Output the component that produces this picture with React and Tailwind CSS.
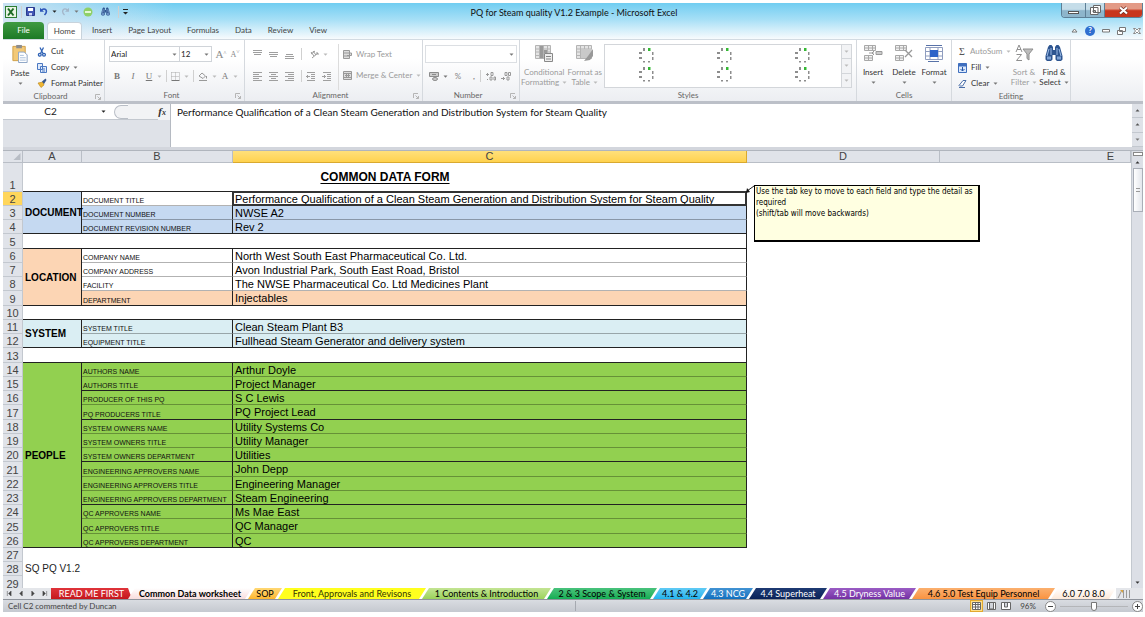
import { useState } from 'react';

// sections of the data form: label column, field column and value column
const SECTIONS = [
  {
    name: 'DOCUMENT', start: 2, color: 'bg-[#c5d9f1]',
    rows: [
      ['DOCUMENT TITLE', 'Performance Qualification of a Clean Steam Generation and Distribution System for Steam Quality', 'white'],
      ['DOCUMENT NUMBER', 'NWSE A2'],
      ['DOCUMENT REVISION NUMBER', 'Rev 2'],
    ],
  },
  {
    name: 'LOCATION', start: 6, color: 'bg-[#fcd5b4]',
    rows: [
      ['COMPANY NAME', 'North West South East Pharmaceutical Co. Ltd.', 'white'],
      ['COMPANY ADDRESS', 'Avon Industrial Park, South East Road, Bristol', 'white'],
      ['FACILITY', 'The NWSE Pharmaceutical Co. Ltd Medicines Plant', 'white'],
      ['DEPARTMENT', 'Injectables'],
    ],
  },
  {
    name: 'SYSTEM', start: 11, color: 'bg-[#daeef3]',
    rows: [
      ['SYSTEM TITLE', 'Clean Steam Plant B3'],
      ['EQUIPMENT TITLE', 'Fullhead Steam Generator and delivery system'],
    ],
  },
  {
    name: 'PEOPLE', start: 14, color: 'bg-[#92d050]',
    rows: [
      ['AUTHORS NAME', 'Arthur Doyle'],
      ['AUTHORS TITLE', 'Project Manager', '', true],
      ['PRODUCER OF THIS PQ', 'S C Lewis'],
      ['PQ PRODUCERS TITLE', 'PQ Project Lead', '', true],
      ['SYSTEM OWNERS NAME', 'Utility Systems Co'],
      ['SYSTEM OWNERS TITLE', 'Utility Manager'],
      ['SYSTEM OWNERS DEPARTMENT', 'Utilities', '', true],
      ['ENGINEERING APPROVERS NAME', 'John Depp'],
      ['ENGINEERING APPROVERS TITLE', 'Engineering Manager'],
      ['ENGINEERING APPROVERS DEPARTMENT', 'Steam Engineering', '', true],
      ['QC APPROVERS NAME', 'Ms Mae East'],
      ['QC APPROVERS TITLE', 'QC Manager'],
      ['QC APPROVERS DEPARTMENT', 'QC'],
    ],
  },
];

const SHEETS = [
  { name: 'READ ME FIRST', cls: 'w-[81px] bg-linear-to-b from-[#e0333a] to-[#c4161c] text-white' },
  { name: 'Common Data worksheet', cls: 'w-[124px] bg-linear-to-b from-white to-[#f8dcdc] font-bold text-black' },
  { name: 'SOP', cls: 'w-[34px] bg-linear-to-b from-[#ffd873] to-[#fdb72c] text-black' },
  { name: 'Front, Approvals and Revisons', cls: 'w-[148px] bg-[#ffff1e] text-[#333300]' },
  { name: '1 Contents & Introduction', cls: 'w-[129px] bg-linear-to-b from-[#c3e493] to-[#9bd35a] text-black' },
  { name: '2 & 3 Scope & System', cls: 'w-[110px] bg-linear-to-b from-[#48c27c] to-[#10ae54] text-black' },
  { name: '4.1 & 4.2', cls: 'w-[54px] bg-linear-to-b from-[#5fcaf5] to-[#1fb4ee] text-black' },
  { name: '4.3 NCG', cls: 'w-[50px] bg-linear-to-b from-[#4193d3] to-[#0f70bf] text-white' },
  { name: '4.4 Superheat', cls: 'w-[78px] bg-linear-to-b from-[#1e3a72] to-[#0a2259] text-white' },
  { name: '4.5 Dryness Value', cls: 'w-[93px] bg-linear-to-b from-[#9a5cc4] to-[#7430a4] text-white' },
  { name: '4.6 5.0 Test Equip Personnel', cls: 'w-[143px] bg-linear-to-b from-[#fbb06e] to-[#fa9340] text-black' },
  { name: '6.0 7.0 8.0', cls: 'w-[65px] bg-linear-to-b from-white to-[#fde9d9] text-black' },
];

const MENU = ['Insert', 'Page Layout', 'Formulas', 'Data', 'Review', 'View'];

// whole-pixel row heights that average out at 14.25px
const rowHeight = (n) => (n === 1 ? 'h-[29px]' : n % 4 === 1 ? 'h-[15px]' : 'h-[14px]');

function Caret({ className = 'text-[#777]' }) {
  return (
    <svg viewBox="0 0 5 3" className={`h-[3px] w-[5px] shrink-0 ${className}`} fill="currentColor">
      <path d="M0.5 0.5h4L2.5 2.8z" />
    </svg>
  );
}

function Launcher() {
  return (
    <svg viewBox="0 0 6 6" className="h-[6px] w-[6px]" fill="none" stroke="#b5b5b5">
      <path d="M0.5 5V0.5H5M2.5 2.5l3 3M5.5 3v2.5H3" />
    </svg>
  );
}

function Group({ label, width, launcher, children }) {
  return (
    <section className={`flex shrink-0 flex-col border-r border-[#d5d9de] ${width}`}>
      <div className="flex h-[51px] pt-1">{children}</div>
      <div className="flex h-[11px] items-center px-[3px] text-[#666]">
        <span className="flex-1 text-center">{label}</span>
        {launcher && <button aria-label={`${label} options`}><Launcher /></button>}
      </div>
    </section>
  );
}

function BigButton({ icon, lines, width, disabled }) {
  return (
    <button className={`flex flex-col items-center whitespace-nowrap ${width} ${disabled ? 'text-[#9b9b9b]' : 'text-[#333]'}`}>
      {icon}
      <span className="mt-[5px] leading-[10px]">{lines[0]}</span>
      <span className="flex h-[10px] items-center gap-[3px] leading-[10px]">
        {lines[1]}
        <Caret className={disabled ? 'text-[#bbb]' : 'text-[#777]'} />
      </span>
    </button>
  );
}

function SmallButton({ icon, label, caret, disabled }) {
  return (
    <button className={`flex h-4 items-center gap-1 whitespace-nowrap ${disabled ? 'text-[#9b9b9b]' : 'text-[#333]'}`}>
      {icon}
      <span>{label}</span>
      {caret && <Caret className={disabled ? 'text-[#bbb]' : 'text-[#777]'} />}
    </button>
  );
}

// three-line alignment glyphs, drawn on a 9x8 grid
function Lines({ d, label }) {
  return (
    <button aria-label={label} className="w-4">
      <svg viewBox="0 0 9 9" className="h-[9px] w-[9px]" fill="none" stroke="#9f9f9f"><path d={d} /></svg>
    </button>
  );
}

const Divider = () => <span className="h-3 w-px shrink-0 bg-[#d0d0d0]" />;

function Binoculars({ className }) {
  return (
    <svg viewBox="0 0 18 18" className={className}>
      <path d="M3 3l1.500-2h2L8 3v3h2V3l1.500-2h2L15 3l2.500 9v3.500L16 17h-4l-1.500-1.500V11h-3v4.500L6 17H2L.5 15.500V12z" fill="#2e5590" />
      <path d="M4 5l-2 7M14 5l2 7M6 4v7M12 4v7" stroke="#9dbce6" />
      <path d="M2 12.500h4v3H2zM12 12.500h4v3h-4z" fill="#7ea2d4" />
    </svg>
  );
}

function CellsIcon({ children }) {
  return (
    <svg viewBox="0 0 20 18" className="h-[18px] w-[20px]" fill="#f1f1f1" stroke="#a8a8a8">
      <path d="M1.500 1.500h11v5h-11zM5.500 1.500v5M9.500 1.500v5M1.500 4h11M1.500 11.500h8v5h-8zM5.500 11.500v5M1.500 14h8" />
      {children}
    </svg>
  );
}

function GridIcon({ children }) {
  return (
    <svg viewBox="0 0 18 18" className="h-[18px] w-[18px] shrink-0" fill="#e4e4e4" stroke="#b4b4b4">
      <path d="M.5 1.500h15v13H.5zM4.500 1.500v13M8.500 1.500v13M12.500 1.500v13M.5 5h15M.5 8h15M.5 11.500h15" />
      {children}
    </svg>
  );
}

// one preview cell of the style gallery: two rings of dashes
function StyleSample() {
  const ring = (y) => (
    <g key={y}>
      <path d={`M5 ${y}h2v3h-2zM1 ${y + 4}h3v2h-3zM1 ${y + 9}h3v2h-3zM5 ${y + 13}h2v1.500h-2zM10 ${y + 13}h2v1.500h-2zM14 ${y + 4}h1.500v3h-1.500zM14 ${y + 9}h1.500v3h-1.500z`} fill="#8d8d8d" />
      <path d={`M10 ${y}h2.500v3h-2.500z`} fill="#35b835" />
    </g>
  );
  return <svg viewBox="0 0 17 36" className="h-[36px] w-[17px]">{[0, 19].map(ring)}</svg>;
}

function TitleBar() {
  return (
    <header className="flex h-[19px] items-start">
      <div className="flex h-[17px] flex-1 items-center gap-1 pl-[2px]">
        <svg viewBox="0 0 12 12" className="h-3 w-3">
          <rect x=".5" y=".5" width="11" height="11" fill="#e9f5e4" stroke="#2d7d32" />
          <path d="M3 2.500l5.500 7M8.500 2.500L3 9.500" stroke="#1d6b25" strokeWidth="2" />
        </svg>
        <Divider />
        <button aria-label="Save">
          <svg viewBox="0 0 9 9" className="h-[9px] w-[9px]">
            <path d="M.5.5h8v8h-8z" fill="#4357b5" stroke="#2b3b8f" />
            <path d="M2 1h5v3H2z" fill="#fff" /><path d="M3 6h3v2.500H3z" fill="#cfd6f5" />
          </svg>
        </button>
        <button aria-label="Undo" className="flex items-center gap-1">
          <svg viewBox="0 0 9 9" className="h-[9px] w-[9px]" fill="none" stroke="#2d54b8" strokeWidth="1.600">
            <path d="M2 3.500C6-.5 9.500 4 5.500 8" /><path d="M1 .8v4h4z" fill="#2d54b8" stroke="none" />
          </svg>
          <Caret className="text-[#222]" />
        </button>
        <button aria-label="Redo" className="flex items-center gap-1">
          <svg viewBox="0 0 9 9" className="h-[9px] w-[9px]" fill="none" stroke="#a3b5c8" strokeWidth="1.300">
            <path d="M7 3.500C3-.5-.5 4 3.500 8" /><path d="M8 .8v4H4z" fill="#a3b5c8" stroke="none" />
          </svg>
          <Caret className="text-[#777]" />
        </button>
        <button aria-label="Check">
          <svg viewBox="0 0 10 10" className="h-[10px] w-[10px]">
            <circle cx="5" cy="5" r="4.500" fill="#8fd067" /><path d="M2 5h6" stroke="#e3f7d5" strokeWidth="2" />
          </svg>
        </button>
        <button aria-label="Find" className="px-1"><Binoculars className="h-[9px] w-[9px]" /></button>
        <Divider />
        <button aria-label="Customize toolbar">
          <svg viewBox="0 0 5 6" className="h-[6px] w-[5px]" fill="#222"><path d="M0 0h5v1H0zM0 3h5L2.500 5.500z" /></svg>
        </button>
      </div>
      <h1 className="flex h-[19px] items-center text-[9px] whitespace-nowrap text-[#111]">PQ for Steam quality V1.2 Example - Microsoft Excel</h1>
      <div className="flex flex-1 justify-end">
        <div className="flex h-[15px] overflow-hidden rounded-b-sm border border-t-0 border-[#5d7f96]">
          <button aria-label="Minimize" className="flex w-6 items-end justify-center border-r border-[#5d7f96] bg-linear-to-b from-[#c5dde9] from-45% to-[#8db5cb] to-55% pb-[3px]">
            <span className="h-[3px] w-[11px] border border-[#555] bg-white" />
          </button>
          <button aria-label="Restore" className="flex w-[19px] items-center justify-center border-r border-[#5d7f96] bg-linear-to-b from-[#c5dde9] from-45% to-[#8db5cb] to-55%">
            <svg viewBox="0 0 11 10" className="h-[10px] w-[11px]" fill="#fff" stroke="#666"><path d="M3.500.5h7v7h-7zM.5 2.500h7.500v7H.5zM3 5.500h2.500v1.500H3z" /></svg>
          </button>
          <button aria-label="Close" className="flex w-[37px] items-center justify-center bg-linear-to-b from-[#e39a86] from-40% to-[#c8361d] to-55%">
            <svg viewBox="0 0 11 9" className="h-[9px] w-[11px]">
              <path d="M2 1.500l7 6M9 1.500l-7 6" stroke="#6b2a20" strokeWidth="3.600" /><path d="M2 1.500l7 6M9 1.500l-7 6" stroke="#fff" strokeWidth="2.200" />
            </svg>
          </button>
        </div>
      </div>
    </header>
  );
}

function RibbonTabs() {
  return (
    <nav className="flex h-[17px] items-stretch text-[#444]">
      <button className="w-[41px] rounded-t-sm bg-linear-to-b from-[#3f9a42] to-[#1c7a26] text-white">File</button>
      <button className="ml-[3px] w-[35px] rounded-t-sm border border-b-0 border-[#c8d3dc] bg-white">Home</button>
      <div className="ml-[2px] flex">
        {MENU.map((m) => <button key={m} className="px-2">{m}</button>)}
      </div>
      <div className="ml-auto flex items-center gap-[7px] pr-[2px]">
        <button aria-label="Collapse ribbon"><svg viewBox="0 0 7 5" className="h-[5px] w-[7px]" fill="#fff" stroke="#777"><path d="M1 4l2.500-3L6 4z" /></svg></button>
        <button aria-label="Help" className="flex h-[10px] w-[10px] items-center justify-center rounded-full bg-[#2f6fd0] text-[8px] font-bold text-white">?</button>
        <button aria-label="Minimize workbook"><svg viewBox="0 0 8 4" className="h-1 w-2" fill="#fff" stroke="#777"><path d="M.5.5h7v2.500h-7z" /></svg></button>
        <button aria-label="Restore workbook"><svg viewBox="0 0 9 8" className="h-2 w-[9px]" fill="#fff" stroke="#777"><path d="M2.500.5h6v4h-6zM.5 3.500h5v4h-5z" /></svg></button>
        <button aria-label="Close workbook"><svg viewBox="0 0 8 8" className="h-2 w-2" stroke="#888"><path d="M.5 1.500h2L4 3l1.500-1.500h2L5.500 4l2 2.500h-2L4 5 2.500 6.500h-2L2.500 4z" fill="#fff" /></svg></button>
      </div>
    </nav>
  );
}

function Ribbon() {
  const toolRow = 'flex h-[18px] items-center';
  return (
    <div className="flex h-[62px] border-t border-[#d3dbe2] bg-linear-to-b from-white from-30% to-[#eceef2]">
      <Group label="Clipboard" width="w-[102px]" launcher>
        <BigButton
          width="w-[34px]" lines={['Paste', '']}
          icon={(
            <svg viewBox="0 0 18 20" className="h-[19px] w-[18px] shrink-0">
              <path d="M1.500 2.500h13v15h-13z" fill="#f3c977" stroke="#cf9f48" /><path d="M5 1h6v3.500H5z" fill="#8d8d8d" />
              <path d="M7.500 8.500h6l3 3v8h-9z" fill="#fff" stroke="#8aa2c4" /><path d="M9 12h4M9 14.500h6M9 17h6" stroke="#a8bedb" />
            </svg>
          )}
        />
        <div className="flex flex-col items-start">
          <SmallButton
            label="Cut"
            icon={<svg viewBox="0 0 10 10" className="h-[10px] w-[10px]" fill="none" stroke="#2f62b5" strokeWidth="1.300"><path d="M3 .5l3 6M6.500.5l-3 6" /><circle cx="2.800" cy="7.800" r="1.400" /><circle cx="7" cy="7.800" r="1.400" /></svg>}
          />
          <SmallButton
            label="Copy" caret
            icon={<svg viewBox="0 0 10 10" className="h-[10px] w-[10px]" fill="#dfeafb" stroke="#4a78c2"><path d="M.5.5h5v6h-5zM3.500 3.500h6v6h-6zM5 6h3M5 8h3" /></svg>}
          />
          <SmallButton
            label="Format Painter"
            icon={<svg viewBox="0 0 10 10" className="h-[10px] w-[10px]"><path d="M1 5l5-1 1 3-3 2.500z" fill="#f0b732" stroke="#b78318" strokeWidth=".6" /><path d="M5 3.500L8.500.5l1 1.500L7 6z" fill="#39588d" /></svg>}
          />
        </div>
      </Group>

      <Group label="Font" width="w-[140px]" launcher>
        <div className="flex flex-1 flex-col gap-[7px] px-1 pt-px">
          <div className={toolRow}>
            <label className="relative flex h-4 w-[71px] items-center border border-[#d0d4d9] bg-white">
              <select aria-label="Font name" className="w-full appearance-none px-px text-[#222] outline-none"><option>Arial</option></select>
              <span className="pointer-events-none absolute right-[2px]"><Caret /></span>
            </label>
            <label className="relative flex h-4 w-8 items-center border border-l-0 border-[#d0d4d9] bg-white">
              <select aria-label="Font size" className="w-full appearance-none px-px text-[#222] outline-none"><option>12</option></select>
              <span className="pointer-events-none absolute right-[2px]"><Caret /></span>
            </label>
            <button className="ml-px w-4 font-['Liberation_Serif'] text-[11px] text-[#888]">A<sup className="text-[6px]">^</sup></button>
            <button className="w-3 font-['Liberation_Serif'] text-[8px] text-[#888]">A<sup className="text-[6px]">˅</sup></button>
          </div>
          <div className="flex h-3 items-center font-['Liberation_Serif'] text-[9px] text-[#777]">
            <button className="w-4 font-bold">B</button>
            <button className="w-4 italic">I</button>
            <button className="w-4 underline">U</button>
            <Caret className="mr-1 text-[#bbb]" />
            <Divider />
            <button aria-label="Borders" className="mx-1"><svg viewBox="0 0 9 9" className="h-[9px] w-[9px]" fill="none" stroke="#aaa"><path d="M.5 8.500h8" stroke="#777" /><path d="M.5.5h8v8M.5.5v8M4.500.5v8M.5 4.500h8" strokeDasharray="1 1" /></svg></button>
            <Caret className="mr-1 text-[#bbb]" />
            <Divider />
            <button aria-label="Fill color" className="mx-1"><svg viewBox="0 0 10 9" className="h-[9px] w-[10px]" fill="none" stroke="#999"><path d="M1 4l3-3 3.500 3L5 6.500zM8.500 4v2.500M1 8.500h8" /></svg></button>
            <Caret className="text-[#bbb]" />
            <button className="w-4">A</button>
            <Caret className="text-[#bbb]" />
          </div>
        </div>
      </Group>

      <Group label="Alignment" width="w-[178px]" launcher>
        <div className="flex flex-col gap-[7px] pt-px pl-2">
          <div className={toolRow}>
            <Lines label="Top align" d="M0 .5h9M0 2.500h9M1 4.500h7" />
            <Lines label="Middle align" d="M0 2.500h9M0 4.500h9M1 6.500h7" />
            <Lines label="Bottom align" d="M1 4.500h7M0 6.500h9M0 8.500h9" />
            <Divider />
            <button aria-label="Orientation" className="ml-2 flex items-center gap-1">
              <svg viewBox="0 0 9 9" className="h-[9px] w-[9px]" fill="none" stroke="#999"><path d="M1 2l3 4M3 1l3 4M1 4l4-3M2 8l6-5M6 3h2v2" /></svg>
              <Caret className="text-[#bbb]" />
            </button>
          </div>
          <div className="flex h-3 items-center">
            <Lines label="Align left" d="M0 .5h9M0 2.500h6M0 4.500h9M0 6.500h6M0 8.500h9" />
            <Lines label="Center" d="M0 .5h9M2 2.500h5M0 4.500h9M2 6.500h5M0 8.500h9" />
            <Lines label="Align right" d="M0 .5h9M3 2.500h6M0 4.500h9M3 6.500h6M0 8.500h9" />
            <Divider />
            <span className="ml-1 flex">
              <Lines label="Decrease indent" d="M1 .5h8M5 2.500h4M5 4.500h4M5 6.500h4M1 8.500h8M0 4.500h4M1.500 3v3" />
              <Lines label="Increase indent" d="M1 .5h8M5 2.500h4M5 4.500h4M5 6.500h4M1 8.500h8M0 4.500h4M2.500 3v3" />
            </span>
          </div>
        </div>
        <div className="flex flex-col gap-[5px] border-l border-[#dcdcdc] pt-[2px] pl-1">
          <SmallButton
            disabled label="Wrap Text"
            icon={<svg viewBox="0 0 9 9" className="h-[9px] w-[9px]" fill="#ddd" stroke="#999"><path d="M.5.5h6v8h-6zM.5 3h8v2.500H4M.5 6h6" /></svg>}
          />
          <SmallButton
            disabled caret label="Merge & Center"
            icon={<svg viewBox="0 0 9 9" className="h-[9px] w-[9px]" fill="#ddd" stroke="#999"><path d="M.5.5h8v8h-8zM.5 2.500h8M.5 6.500h8M2 4.500h5M3.500 3v3M5.500 3v3" /></svg>}
          />
        </div>
      </Group>

      <Group label="Number" width="w-[97px]" launcher>
        <div className="flex flex-1 flex-col gap-[7px] px-[2px] pt-px">
          <label className="relative flex h-[18px] items-center border border-[#dcdfe3] bg-white">
            <select aria-label="Number format" className="w-full appearance-none outline-none"><option> </option></select>
            <span className="pointer-events-none absolute right-[2px]"><Caret /></span>
          </label>
          <div className="flex h-3 items-center pl-1 text-[#888]">
            <button aria-label="Accounting format" className="mr-1"><svg viewBox="0 0 10 9" className="h-[9px] w-[10px]" fill="#ccc" stroke="#8b8b8b"><path d="M.5.5h9v4h-9zM3 2.500h4" /><ellipse cx="6" cy="7" rx="2.500" ry="1.500" /></svg></button>
            <Caret />
            <button className="w-5">%</button>
            <button className="w-3 font-bold">,</button>
            <Divider />
            <button aria-label="Increase decimal" className="mx-[5px]"><svg viewBox="0 0 10 9" className="h-[9px] w-[10px]" fill="none" stroke="#999"><path d="M0 2.500h3M1.500 1v3M5 .5h2v3H5zM8 5h1.500v3H8zM4 5h2v3H4zM1 7.500h1" /></svg></button>
            <button aria-label="Decrease decimal"><svg viewBox="0 0 10 9" className="h-[9px] w-[10px]" fill="none" stroke="#999"><path d="M4 .5h2v3H4zM7.500.5h2v3h-2zM0 6.500h4M2.500 5v3M6 5h2v3H6z" /></svg></button>
          </div>
        </div>
      </Group>

      <Group label="Styles" width="w-[337px]">
        <BigButton
          disabled width="w-[52px]" lines={['Conditional', 'Formatting']}
          icon={<GridIcon><path d="M5 2h3v12H5zM9 6h3v3H9z" fill="#9a9a9a" stroke="none" /><path d="M9.500 9.500h8v8h-8z" fill="#eee" stroke="#888" /><path d="M11 12.500h5M11 15h5" stroke="#888" /></GridIcon>}
        />
        <BigButton
          disabled width="w-[33px]" lines={['Format as', 'Table']}
          icon={<GridIcon><path d="M5 5h11v9H5z" fill="#c9c9c9" stroke="none" /><path d="M17 5l-5 7-4 5 6-1 3-4z" fill="#999" stroke="none" /></GridIcon>}
        />
        <div className="ml-[3px] flex h-[44px] flex-1 border border-[#d3d6da] bg-white pl-[2px]">
          {[1, 2, 3].map((n) => (
            <button key={n} aria-label={`Cell style ${n}`} className="flex w-[78px] items-center justify-center"><StyleSample /></button>
          ))}
          <div className="ml-auto flex w-[10px] flex-col divide-y divide-[#d3d6da] border-l border-[#d3d6da] bg-[#f2f3f5]">
            {['Previous styles', 'Next styles', 'More styles'].map((s) => (
              <button key={s} aria-label={s} className="flex flex-1 items-center justify-center"><Caret className="text-[#bbb]" /></button>
            ))}
          </div>
        </div>
        <span className="w-1" />
      </Group>

      <Group label="Cells" width="w-[95px]">
        <BigButton width="w-8" lines={['Insert', '']} icon={<CellsIcon><path d="M6 9h3M13 7.500h6v3h-6zM11 7L9 9l2 2" stroke="#999" fill="#ccc" /></CellsIcon>} />
        <BigButton width="w-[30px]" lines={['Delete', '']} icon={<CellsIcon><path d="M11 6l7 7M18 6l-7 7" stroke="#999" strokeWidth="1.300" /></CellsIcon>} />
        <BigButton
          width="w-[30px]" lines={['Format', '']}
          icon={(
            <svg viewBox="0 0 20 18" className="h-[18px] w-5">
              <path d="M1.500 3.500h17v12h-17zM1.500 7.500h17M1.500 12h17M6 3.500v12M14 3.500v12" fill="#fff" stroke="#8f9dbf" />
              <path d="M6 6h8v7H6z" fill="#2d63c8" /><path d="M2 1.500h16M4 17.500h11" stroke="#5872a8" />
            </svg>
          )}
        />
      </Group>

      <Group label="Editing" width="w-[119px]">
        <div className="flex w-[57px] flex-col items-start pl-[6px]">
          <SmallButton disabled caret label="AutoSum" icon={<span className="w-2 font-['Liberation_Serif'] text-[10px] text-[#555]">Σ</span>} />
          <SmallButton caret label="Fill" icon={<svg viewBox="0 0 9 10" className="h-[10px] w-[9px]"><path d="M.5.5h8v9h-8z" fill="#dce9fb" stroke="#3f6fbe" /><path d="M.5.5h8v3h-8z" fill="#3f6fbe" /><path d="M4.500 4v4M2.500 6l2 2 2-2" stroke="#2455a8" fill="none" /></svg>} />
          <SmallButton caret label="Clear" icon={<svg viewBox="0 0 9 9" className="h-[9px] w-[9px]" fill="#fff" stroke="#4a6ea8"><path d="M1 6.500L5 1.500h3L4.500 7H1.500zM1 8.500h6" /></svg>} />
        </div>
        <BigButton
          disabled width="w-[30px]" lines={['Sort &', 'Filter']}
          icon={(
            <svg viewBox="0 0 20 18" className="h-[18px] w-5" fill="none" stroke="#8e8e8e">
              <path d="M2 8l3-7 3 7M3 5.500h4M2.500 10.500h5l-5 6h5.500" /><path d="M9 5h10l-4 5v6l-2-1.500V10z" fill="#bdbdbd" />
            </svg>
          )}
        />
        <BigButton width="w-[30px]" lines={['Find &', 'Select']} icon={<Binoculars className="h-[18px] w-[18px]" />} />
      </Group>
    </div>
  );
}

function FormulaBar({ value, onChange }) {
  return (
    <div className="flex h-[43px] bg-white text-[10px]">
      <div className="w-[168px] border-r border-[#b5bac2] bg-[#dfe2e8]">
        <div className="flex h-4 items-center border-b border-[#c3c8cf] bg-white">
          <input aria-label="Name box" defaultValue="C2" className="w-[95px] bg-transparent text-center text-[#222] outline-none" />
          <button aria-label="Names" className="w-3 pl-[3px]"><Caret className="text-[#222]" /></button>
          <span className="ml-1 h-[14px] w-[14px] rounded-l-full border border-r-0 border-[#b9bec6] bg-[#f2f3f5]" />
          <span className="h-[15px] flex-1 bg-[#f2f3f5]" />
          <button className="bg-[#f2f3f5] pr-1 font-['Liberation_Serif'] text-[11px] leading-[15px] font-bold text-[#333] italic">f<span className="text-[8px]">x</span></button>
        </div>
      </div>
      <textarea
        aria-label="Formula" value={value} onChange={(e) => onChange(e.target.value)}
        className="flex-1 resize-none px-[6px] py-px leading-[14px] text-[#111] outline-none"
      />
      <div className="flex w-[11px] flex-col bg-[#dfe2e8]">
        {['Collapse formula bar', 'Scroll formula up', 'Scroll formula down'].map((s, i) => (
          <button key={s} aria-label={s} className="flex flex-1 items-center justify-center border-b border-[#c3c8cf]">
            <Caret className={i < 2 ? 'rotate-180 text-[#555]' : 'text-[#777]'} />
          </button>
        ))}
      </div>
    </div>
  );
}

function RowHead({ n }) {
  return (
    <th className={`border-r border-b border-[#c3c8cf] p-0 text-center align-bottom text-[11px] leading-[12px] font-normal ${n === 2 ? 'bg-[#ffd65c]' : 'bg-[#e0e3e9]'} text-[#444]`}>{n}</th>
  );
}

function Comment() {
  return (
    <div className="absolute -top-[7px] left-[521px] z-10 flex">
      <svg viewBox="0 0 8 8" className="-ml-2 h-2 w-2"><path d="M8 1L1 6" stroke="#222" /><path d="M0 8l1-5 3 4z" fill="#111" /></svg>
      <p className="h-[57px] w-[226px] border border-r-2 border-b-2 border-black bg-[#ffffe1] px-px font-['DejaVu_Sans_Condensed',sans-serif] text-[8px] leading-[11px] whitespace-normal text-black">
        Use the tab key to move to each field and type the detail as required
        <br />
        (shift/tab will move backwards)
      </p>
    </div>
  );
}

function FormSection({ section, title }) {
  const { rows, start, color, name } = section;
  return rows.map(([label, value, fill, solid], i) => {
    const n = start + i;
    const last = i === rows.length - 1;
    const bg = fill === 'white' ? 'bg-white' : color;
    const line = last || solid ? 'border-b border-b-[#222]' : 'border-b border-b-black/30';
    return (
      <tr key={n} className={rowHeight(n)}>
        <RowHead n={n} />
        {i === 0 && (
          <td rowSpan={rows.length} className={`border-r border-b border-[#222] p-0 pl-[2px] text-[10px] font-bold ${color}`}>{name}</td>
        )}
        <td className={`border-r border-r-[#222] p-0 pl-px align-bottom text-[7px] leading-[8px] text-[#111] ${line} ${bg}`}>{label}</td>
        <td className={`relative border-r border-r-[#222] p-0 pl-[2px] text-[11px] leading-[12px] ${line} ${bg}`}>
          {n === 2 ? title : value}
          {n === 2 && (
            <>
              <span className="pointer-events-none absolute -inset-x-px -top-px bottom-[-1px] border-2 border-[#333]" />
              <Comment />
            </>
          )}
        </td>
        <td />
        <td />
      </tr>
    );
  });
}

function BlankRow({ n, text, ruled }) {
  return (
    <tr className={rowHeight(n)}>
      <RowHead n={n} />
      <td colSpan={3} className={`p-0 pl-[2px] text-[10px] leading-[12px] text-[#222] ${ruled ? 'border-r border-b border-[#222]' : ''}`}>{text}</td>
      <td />
      <td />
    </tr>
  );
}

function Sheet({ title }) {
  const head = 'border-r border-b border-[#b9bec6] bg-[#e0e3e9] p-0 text-[11px] leading-[11px] font-normal text-[#444]';
  return (
    <div className="flex min-h-0 flex-1 border-t border-[#b0b5bd] bg-white">
      <div className="min-w-0 flex-1 overflow-hidden">
        <table className="w-full table-fixed border-separate border-spacing-0 whitespace-nowrap font-['Liberation_Sans',Arial,sans-serif] text-black">
          <colgroup>
            <col className="w-5" />
            <col className="w-[59px]" />
            <col className="w-[151px]" />
            <col className="w-[514px]" />
            <col className="w-[193px]" />
            <col />
          </colgroup>
          <thead>
            <tr className="h-3">
              <th className={head}><svg viewBox="0 0 8 8" className="ml-auto h-2 w-[9px]" fill="#b8bdc5"><path d="M7 0v7H0z" /></svg></th>
              <th className={head}>A</th>
              <th className={head}>B</th>
              <th className="border-r border-b border-[#d9a92f] bg-linear-to-b from-[#ffe07a] to-[#ffd24d] p-0 text-[11px] leading-[11px] font-normal text-[#444]">C</th>
              <th className={head}>D</th>
              <th className={`${head} pr-4 text-right`}>E</th>
            </tr>
          </thead>
          <tbody>
            <tr className={rowHeight(1)}>
              <RowHead n={1} />
              <td colSpan={3} className="border-b border-[#222] p-0 text-center text-[12px] font-bold underline underline-offset-2">COMMON DATA FORM</td>
              <td />
              <td />
            </tr>
            <FormSection section={SECTIONS[0]} title={title} />
            <BlankRow n={5} ruled />
            <FormSection section={SECTIONS[1]} />
            <BlankRow n={10} ruled />
            <FormSection section={SECTIONS[2]} />
            <BlankRow n={13} ruled />
            <FormSection section={SECTIONS[3]} />
            <BlankRow n={27} />
            <BlankRow n={28} text="SQ PQ V1.2" />
            <BlankRow n={29} />
          </tbody>
        </table>
      </div>
      <div className="flex w-3 flex-col items-center border-l border-[#c3c8cf] bg-[#dcdfe6]">
        <span className="mt-px h-1 w-[10px] border border-[#888] bg-white" />
        <button aria-label="Scroll up" className="flex h-3 items-center"><Caret className="rotate-180 text-[#333]" /></button>
        <span className="flex h-[44px] w-[10px] items-center justify-center border border-[#a9aeb7] bg-linear-to-r from-white to-[#e3e6ec]">
          <span className="h-1 w-1 border-y border-[#999]" />
        </span>
        <button aria-label="Scroll down" className="mt-auto flex h-3 items-center"><Caret className="text-[#333]" /></button>
      </div>
    </div>
  );
}

function SheetTabs() {
  const arrows = [
    ['First sheet', 'M1.500 0v6M6 0v6L3 3z'],
    ['Previous sheet', 'M5 0v6L2 3z'],
    ['Next sheet', 'M2 0v6l3-3z'],
    ['Last sheet', 'M1 0v6l3-3zM5.500 0v6'],
  ];
  return (
    <div className="flex h-3 border-b border-[#8f949c] bg-[#e4e6ea]">
      <div className="flex w-12 shrink-0 items-center justify-around">
        {arrows.map(([label, d]) => (
          <button key={label} aria-label={label}><svg viewBox="0 0 7 6" className="h-[5px] w-[6px]" fill="#444" stroke="#444" strokeWidth=".6"><path d={d} /></svg></button>
        ))}
      </div>
      <div className="flex min-w-0 overflow-hidden bg-white text-[9px]">
        {SHEETS.map((s, i) => (
          <button
            key={s.name}
            className={`h-[11px] shrink-0 leading-[11px] whitespace-nowrap ${i ? '-ml-1 [clip-path:polygon(7px_0,100%_0,calc(100%-7px)_100%,0_100%)]' : '[clip-path:polygon(0_0,calc(100%-4px)_0,100%_100%,0_100%)]'} ${s.cls}`}
          >
            {s.name}
          </button>
        ))}
      </div>
      <button aria-label="Insert worksheet" className="ml-px">
        <svg viewBox="0 0 14 10" className="h-[10px] w-[14px]" fill="none" stroke="#999"><path d="M1 9l4-8M6.500 1v8M9.500 1v8M12.500 1v8" /><path d="M3 1h3v3z" fill="#d9a441" stroke="none" /></svg>
      </button>
    </div>
  );
}

function StatusBar({ zoom, onZoom }) {
  return (
    <footer className="flex h-3 items-center bg-linear-to-b from-[#d9dce1] to-[#c5c9d0] text-[#444]">
      <span className="flex-1 pl-[5px]">Cell C2 commented by Duncan</span>
      <span className="h-[10px] w-px bg-[#a5a9b0]" />
      <div className="flex flex-1 items-center justify-end gap-1">
        <button aria-label="Normal view" className="border border-[#e2a92f] bg-[#ffe08a] p-px"><svg viewBox="0 0 9 8" className="h-2 w-[9px]" fill="#fff" stroke="#666"><path d="M.5.5h8v7h-8zM3.500.5v7M6 .5v7M.5 2.500h8M.5 5h8" /></svg></button>
        <button aria-label="Page layout view"><svg viewBox="0 0 9 8" className="h-2 w-[9px]" fill="#fff" stroke="#666"><path d="M.5.5h8v7h-8zM2.500 1v6h4V1" /></svg></button>
        <button aria-label="Page break view" className="ml-px"><svg viewBox="0 0 10 8" className="h-2 w-[10px]" fill="#fff" stroke="#666"><path d="M.5.5h9v7h-9zM3.500.5V5h3V.5" /></svg></button>
        <button className="mx-[3px] w-5">{zoom}%</button>
        <button aria-label="Zoom out" onClick={() => onZoom(zoom - 1)} className="flex h-[11px] w-[11px] items-center justify-center rounded-full border border-[#888] bg-white"><span className="h-px w-[5px] bg-[#444]" /></button>
        <input
          type="range" aria-label="Zoom" min="10" max="182" value={zoom} onChange={(e) => onZoom(Number(e.target.value))}
          className="h-[10px] w-[68px] appearance-none bg-linear-to-b from-transparent from-45% via-[#999] via-50% to-transparent to-60% [&::-webkit-slider-thumb]:h-[9px] [&::-webkit-slider-thumb]:w-[6px] [&::-webkit-slider-thumb]:appearance-none [&::-webkit-slider-thumb]:rounded-b-sm [&::-webkit-slider-thumb]:border [&::-webkit-slider-thumb]:border-[#777] [&::-webkit-slider-thumb]:bg-white"
        />
        <button aria-label="Zoom in" onClick={() => onZoom(zoom + 1)} className="flex h-[11px] w-[11px] items-center justify-center rounded-full border border-[#888] bg-white"><svg viewBox="0 0 5 5" className="h-[5px] w-[5px]" stroke="#444"><path d="M0 2.500h5M2.500 0v5" /></svg></button>
      </div>
    </footer>
  );
}

export default function App() {
  const [title, setTitle] = useState(SECTIONS[0].rows[0][1]);
  const [zoom, setZoom] = useState(96);

  return (
    <div className="flex h-screen flex-col bg-white pt-[3px] pr-[2px] pb-[5px] pl-[3px] font-['Lato',sans-serif] text-[8px] leading-[11px]">
      <div className="bg-linear-to-b from-[#6fcdf1] via-[#a5dff6] via-45% to-[#f8fbfd]">
        <div className="bg-linear-to-r from-[#dfe6f2]/80 via-transparent via-15% to-transparent">
          <TitleBar />
          <RibbonTabs />
        </div>
      </div>
      <Ribbon />
      <div className="h-[3px] bg-[#bcc0c8]" />
      <FormulaBar value={title} onChange={setTitle} />
      <div className="h-[3px] bg-[#d3d6dd]" />
      <Sheet title={title} />
      <SheetTabs />
      <StatusBar zoom={zoom} onZoom={setZoom} />
    </div>
  );
}
